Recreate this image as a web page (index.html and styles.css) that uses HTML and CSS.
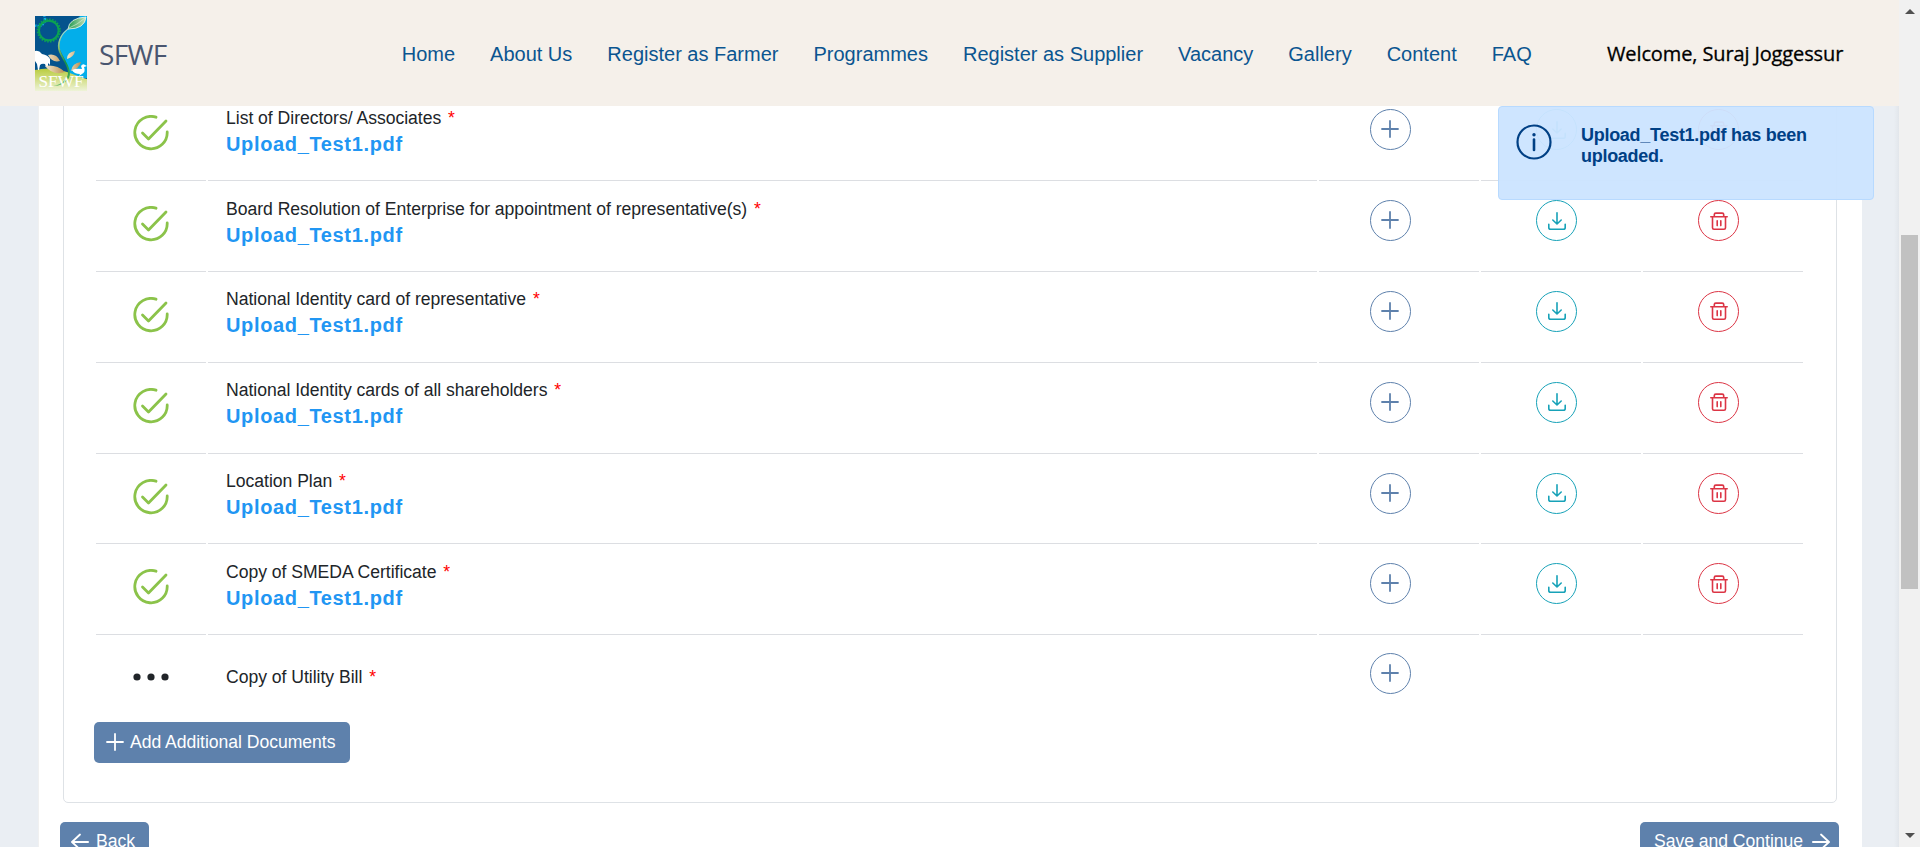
FILE: index.html
```html
<!DOCTYPE html>
<html lang="en">
<head>
<meta charset="utf-8">
<title>SFWF</title>
<link rel="stylesheet" href="styles.css">
</head>
<body>
<svg class="defs" width="0" height="0" aria-hidden="true">
  <symbol id="check" viewBox="0 0 36 36"><g fill="none" stroke="currentColor" stroke-width="2.800" stroke-linecap="round" stroke-linejoin="round"><path d="M23 2.200A16.200 16.200 0 1 0 34.200 17"/><path d="M9.500 18L15.500 24L33 6"/></g></symbol>
  <symbol id="plus" viewBox="0 0 18 18"><path d="M9 1v16M1 9h16" fill="none" stroke="currentColor" stroke-width="1.800" stroke-linecap="round"/></symbol>
  <symbol id="download" viewBox="0 0 18 18"><path d="M9 .8v10.800M4.800 8L9 12l4.200-4M.8 12.200v3.200q0 1.800 1.800 1.800h12.800q1.800 0 1.800-1.800v-3.200" fill="none" stroke="currentColor" stroke-width="1.600" stroke-linecap="round" stroke-linejoin="round"/></symbol>
  <symbol id="trash" viewBox="0 0 18 18"><path d="M.8 4.800h16.400M4.300 4.800V2.600q0-1.500 1.500-1.500h6.400q1.500 0 1.500 1.500v2.200M2.500 4.800v10.900q0 1.500 1.500 1.500h10q1.500 0 1.500-1.500V4.800M7.200 8.800v4.800M10.800 8.800v4.800" fill="none" stroke="currentColor" stroke-width="1.600" stroke-linecap="round"/></symbol>
  <symbol id="arrow" viewBox="0 0 18 18"><path d="M.9 9h16.200M9 1.500L1 9l8 7.500" fill="none" stroke="currentColor" stroke-width="1.800" stroke-linecap="round" stroke-linejoin="round"/></symbol>
</svg>
<div class="page">
  <div class="view">
    <header class="header">
      <svg class="logo" viewBox="0 0 52 75">
        <defs>
          <linearGradient id="hill" x1="0" y1="0" x2="0" y2="1"><stop offset="0" stop-color="#b9cc3c"/><stop offset="1" stop-color="#eef3d8"/></linearGradient>
          <linearGradient id="leaf" x1="0" y1="0" x2="1" y2="0"><stop offset="0" stop-color="#1d9a50"/><stop offset="1" stop-color="#c4dfb5"/></linearGradient>
          <linearGradient id="stem" x1="0" y1="0" x2="0" y2="1"><stop offset="0" stop-color="#b8dfe0"/><stop offset=".35" stop-color="#8cc06c"/><stop offset=".6" stop-color="#15934a"/><stop offset="1" stop-color="#5db85c"/></linearGradient>
          <linearGradient id="grain" x1="0" y1="0" x2="1" y2="0"><stop offset="0" stop-color="#f6e9cf"/><stop offset="1" stop-color="#b98f50"/></linearGradient>
        </defs>
        <rect width="52" height="75" fill="#04538d"/>
        <path d="M35 12C26 16 22 24 25 34C30 44 35 52 34 62H52V0H45Z" fill="#03aeea"/>
        <circle cx="3" cy="3" r="7" fill="none" stroke="#12a9e2" stroke-width="2.500" stroke-dasharray="1.500 1"/>
        <circle cx="13.800" cy="14.500" r="9.800" fill="none" stroke="#0ca252" stroke-width="2"/>
        <circle cx="13.800" cy="14.500" r="11.200" fill="none" stroke="#0ca252" stroke-width="1.800" stroke-dasharray="1.600 1.330"/>
        <path d="M0 54Q16 50 32 56T52 63V75H0Z" fill="url(#hill)"/>
        <path d="M0 35Q4 34 7 38Q13 39 15 43V49L13 47V51H11L10 48Q7 47 5 49L4 54H3L2 48L0 45Z" fill="#fff"/>
        <path d="M13 39Q21 37 25 45Q17 47 13 39ZM10 50Q21 48 30 56Q18 60 10 50Z" fill="url(#grain)"/>
        <path d="M32 43Q32 36 40 35Q39 41 32 43ZM36 55Q37 47 46 46Q44 53 36 55Z" fill="url(#grain)"/>
        <path d="M37 54Q41 52 47 53L46 50Q48 47 50 49L52 50L49 51Q51 56 47 58L44 60L45 58Q39 58 37 54Z" fill="#fff"/>
        <path d="M35 11C24 18 21 28 24 36C28 46 39 56 29 65Q25 69 18 70Q29 70 34 62C38 53 29 44 25.500 35C23 27 26 18 35 12Z" fill="url(#stem)"/>
        <path d="M33 13Q34 2 51 1Q50 13 33 13Z" fill="url(#leaf)" stroke="#eff8ef" stroke-width=".8"/>
        <path d="M34 12Q42 9 50 2" fill="none" stroke="#e2f2df" stroke-width=".6"/>
        <text class="logo-text" x="3.500" y="71.300" textLength="45" lengthAdjust="spacingAndGlyphs">SFWF</text>
      </svg>
      <span class="brand">SFWF</span>
      <nav class="nav"><a>Home</a><a>About Us</a><a>Register as Farmer</a><a>Programmes</a><a>Register as Supplier</a><a>Vacancy</a><a>Gallery</a><a>Content</a><a>FAQ</a></nav>
      <span class="welcome">Welcome, Suraj Joggessur</span>
      <aside class="toast">
        <svg class="toast-icon" viewBox="0 0 36 36"><circle cx="18" cy="18" r="16.500" fill="none" stroke="currentColor" stroke-width="2.200"/><circle cx="18" cy="10.700" r="1.700" fill="currentColor"/><path d="M18 15.500v10.500" stroke="currentColor" stroke-width="2.600" stroke-linecap="round"/></svg>
        <p class="toast-text">Upload_Test1.pdf has been uploaded.</p>
      </aside>
    </header>
    <main class="panel">
      <section class="card">
        <div class="rows">
          <div class="row">
            <div class="cell"><svg class="check"><use href="#check"/></svg></div>
            <div class="cell doc"><div>List of Directors/ Associates <b class="req">*</b></div><a class="file">Upload_Test1.pdf</a></div>
            <div class="cell act-add"><span class="btn-round add"><svg><use href="#plus"/></svg></span></div>
            <div class="cell act"><span class="btn-round down"><svg><use href="#download"/></svg></span></div>
            <div class="cell act"><span class="btn-round del"><svg><use href="#trash"/></svg></span></div>
          </div>
          <div class="row">
            <div class="cell"><svg class="check"><use href="#check"/></svg></div>
            <div class="cell doc"><div>Board Resolution of Enterprise for appointment of representative(s) <b class="req">*</b></div><a class="file">Upload_Test1.pdf</a></div>
            <div class="cell act-add"><span class="btn-round add"><svg><use href="#plus"/></svg></span></div>
            <div class="cell act"><span class="btn-round down"><svg><use href="#download"/></svg></span></div>
            <div class="cell act"><span class="btn-round del"><svg><use href="#trash"/></svg></span></div>
          </div>
          <div class="row">
            <div class="cell"><svg class="check"><use href="#check"/></svg></div>
            <div class="cell doc"><div>National Identity card of representative <b class="req">*</b></div><a class="file">Upload_Test1.pdf</a></div>
            <div class="cell act-add"><span class="btn-round add"><svg><use href="#plus"/></svg></span></div>
            <div class="cell act"><span class="btn-round down"><svg><use href="#download"/></svg></span></div>
            <div class="cell act"><span class="btn-round del"><svg><use href="#trash"/></svg></span></div>
          </div>
          <div class="row">
            <div class="cell"><svg class="check"><use href="#check"/></svg></div>
            <div class="cell doc"><div>National Identity cards of all shareholders <b class="req">*</b></div><a class="file">Upload_Test1.pdf</a></div>
            <div class="cell act-add"><span class="btn-round add"><svg><use href="#plus"/></svg></span></div>
            <div class="cell act"><span class="btn-round down"><svg><use href="#download"/></svg></span></div>
            <div class="cell act"><span class="btn-round del"><svg><use href="#trash"/></svg></span></div>
          </div>
          <div class="row">
            <div class="cell"><svg class="check"><use href="#check"/></svg></div>
            <div class="cell doc"><div>Location Plan <b class="req">*</b></div><a class="file">Upload_Test1.pdf</a></div>
            <div class="cell act-add"><span class="btn-round add"><svg><use href="#plus"/></svg></span></div>
            <div class="cell act"><span class="btn-round down"><svg><use href="#download"/></svg></span></div>
            <div class="cell act"><span class="btn-round del"><svg><use href="#trash"/></svg></span></div>
          </div>
          <div class="row">
            <div class="cell"><svg class="check"><use href="#check"/></svg></div>
            <div class="cell doc"><div>Copy of SMEDA Certificate <b class="req">*</b></div><a class="file">Upload_Test1.pdf</a></div>
            <div class="cell act-add"><span class="btn-round add"><svg><use href="#plus"/></svg></span></div>
            <div class="cell act"><span class="btn-round down"><svg><use href="#download"/></svg></span></div>
            <div class="cell act"><span class="btn-round del"><svg><use href="#trash"/></svg></span></div>
          </div>
          <div class="row last">
            <div class="cell"><svg class="dots" viewBox="0 0 36 8"><circle cx="4" cy="4" r="3.600"/><circle cx="18" cy="4" r="3.600"/><circle cx="32" cy="4" r="3.600"/></svg></div>
            <div class="cell doc"><div>Copy of Utility Bill <b class="req">*</b></div></div>
            <div class="cell act-add"><span class="btn-round add"><svg><use href="#plus"/></svg></span></div>
            <div class="cell"></div>
            <div class="cell"></div>
          </div>
        </div>
        <button class="btn add-docs"><svg><use href="#plus"/></svg>Add Additional Documents</button>
      </section>
      <div class="actions">
        <button class="btn back"><svg><use href="#arrow"/></svg>Back</button>
        <button class="btn save">Save and Continue<svg class="flip"><use href="#arrow"/></svg></button>
      </div>
    </main>
  </div>
  <div class="scrollbar">
    <svg class="tick" viewBox="0 0 10 5"><path d="M0 5L5 0L10 5Z"/></svg>
    <div class="thumb"></div>
    <svg class="tick" viewBox="0 0 10 5"><path d="M0 0L5 5L10 0Z"/></svg>
  </div>
</div>
</body>
</html>
```
FILE: styles.css
```css
* { box-sizing: border-box; }
body { margin: 0; font-family: "Liberation Sans", Arial, sans-serif; color: #212529; overflow: hidden; }
.defs { display: none; }
.page { display: flex; height: 847px; overflow: hidden; }
.view { width: 1899px; height: 847px; overflow: hidden; background: linear-gradient(90deg, transparent 1894px, #e2e6eb 1899px), #eaeef3; }
.header { position: relative; z-index: 2; display: flex; align-items: center; height: 106px; padding-left: 35px; background: #f5f0ea; white-space: nowrap; }
.logo { width: 52px; height: 75px; flex: none; }
.logo-text { font: 17.500px "Liberation Serif", serif; fill: #fff; }
.brand { width: 301px; padding-left: 12px; margin-top: 2px; font: 28px "Open Sans", sans-serif; color: #4a5670; letter-spacing: -.6px; }
.nav { display: flex; gap: 35px; width: 1219px; padding-left: 13.700px; margin-top: 2px; font-size: 20px; color: #0b5590; }
.welcome { font: 500 20px "Open Sans", sans-serif; color: #000; letter-spacing: -.12px; -webkit-text-stroke: .3px #000; margin-top: 1px; }
.toast { position: absolute; left: 1498px; top: 106px; width: 376px; height: 94px; display: flex; padding: 17px 0 0 17px; background: rgba(204,228,255,.96); border: 1px solid #b8daff; border-radius: 4px; color: #004085; white-space: normal; }
.toast-icon { width: 36px; height: 36px; }
.toast-text { width: 250px; margin: 1px 0 0 29px; font-weight: 700; font-size: 18px; letter-spacing: -.28px; line-height: 21px; }
.panel { width: 1824px; height: 830px; margin: -36px 0 0 38px; padding: 0 23px 0 21px; background: #fff; border-left: 1px solid #f0f0f0; }
.card { height: 733px; margin: 0 2px 0 3px; padding: 19.350px 32px 0 30px; border: 1px solid #dee2e6; border-radius: 5px; }
.rows { padding-left: 2px; }
.row { display: grid; grid-template-columns: 110px 1109px 160px 160px 160px; column-gap: 2px; height: 90.8px; }
.cell { display: flex; justify-content: center; align-items: flex-start; padding-top: 19px; border-bottom: 1px solid #dcdee2; }
.cell.doc { display: block; padding: 16.500px 0 0 18px; font-size: 17.600px; line-height: 22px; letter-spacing: -.03px; }
.act-add { padding-right: 17px; }
.act { padding-right: 9px; }
.req { font-weight: 400; color: #f00; margin-left: 2px; }
.file { display: block; margin-top: 3px; font-size: 20px; font-weight: 700; letter-spacing: .65px; color: #2196f3; line-height: 24px; }
.check { width: 36px; height: 36px; margin-top: 6px; color: #8bc34a; }
.btn-round { display: flex; align-items: center; justify-content: center; width: 41px; height: 41px; border: 1px solid; border-radius: 50%; }
.btn-round svg { width: 18px; height: 18px; }
.btn-round svg, .btn svg { flex: none; }
.add { color: #5e81ac; }
.down { color: #17a2b8; }
.del { color: #dc3545; }
.add svg { margin: -1px 2px 0 0; }
.last { height: 86.650px; }
.last .cell { border: 0; padding-top: 18px; }
.last .cell.doc { padding: 31px 0 0 18px; }
.dots { width: 36px; height: 8px; margin-top: 20px; fill: #212529; }
.btn { display: flex; align-items: center; height: 41px; padding: 0; border: 0; border-radius: 5px; background: #5e81ac; color: #fff; font: 17.600px "Liberation Sans", Arial, sans-serif; letter-spacing: -.04px; white-space: nowrap; }
.btn svg { width: 18px; height: 18px; }
.add-docs { width: 256px; padding-left: 12px; gap: 6px; }
.actions { display: flex; justify-content: space-between; margin-top: 19px; }
.back { width: 89px; padding-left: 11px; gap: 7px; }
.save { width: 199px; padding-left: 14px; gap: 9px; }
.back, .save { padding-bottom: 2px; }
.flip { transform: scaleX(-1); }
.scrollbar { width: 21px; height: 847px; display: flex; flex-direction: column; align-items: center; padding: 9px 0 9px; background: #f1f1f1; }
.tick { width: 10px; height: 5px; fill: #505050; }
.thumb { width: 17px; height: 354px; margin: 221px 0 244px; background: #c1c1c1; }
```
